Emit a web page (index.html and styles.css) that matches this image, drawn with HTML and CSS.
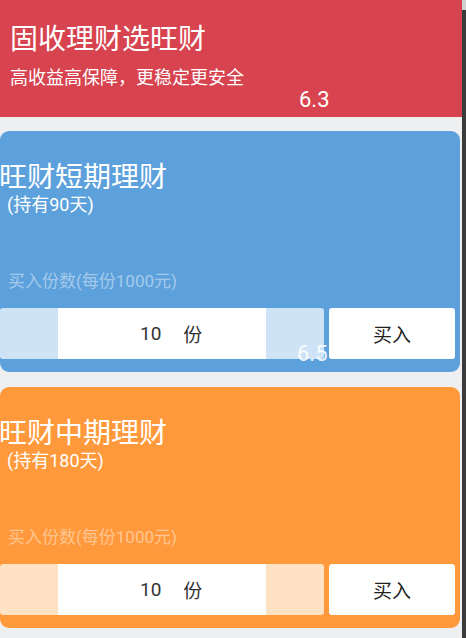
FILE: index.html
```html
<!DOCTYPE html>
<html lang="zh-CN">
<head>
<meta charset="utf-8">
<title>旺财理财</title>
<link rel="stylesheet" href="styles.css">
</head>
<body>
<div class="page">
  <div class="main">
    <header class="header">
      <h1 class="header-title">固收理财选旺财</h1>
      <p class="header-sub">高收益高保障，更稳定更安全</p>
      <span class="rate rate-header">6.3</span>
    </header>
    <div class="cards">
      <section class="card card-blue">
        <h2 class="card-title">旺财短期理财</h2>
        <p class="card-sub">(持有90天)</p>
        <p class="card-label">买入份数(每份1000元)</p>
        <div class="buy-row">
          <div class="qty">
            <div class="qty-inner"><span class="qty-num">10</span><span class="qty-unit">份</span></div>
          </div>
          <button class="buy-btn">买入</button>
        </div>
        <span class="rate rate-card">6.5</span>
      </section>
      <section class="card card-orange">
        <h2 class="card-title">旺财中期理财</h2>
        <p class="card-sub">(持有180天)</p>
        <p class="card-label">买入份数(每份1000元)</p>
        <div class="buy-row">
          <div class="qty">
            <div class="qty-inner"><span class="qty-num">10</span><span class="qty-unit">份</span></div>
          </div>
          <button class="buy-btn">买入</button>
        </div>
      </section>
    </div>
  </div>
  <div class="strip"></div>
</div>
</body>
</html>
```

FILE: styles.css
```css
* { box-sizing: border-box; }
html, body {
  margin: 0;
  padding: 0;
}
body {
  width: 466px;
  height: 638px;
  overflow: hidden;
  background: #eeeff0;
  font-family: "Roboto", "Noto Sans CJK SC", sans-serif;
  color: #fff;
}
.page {
  display: flex;
  height: 638px;
}
.main {
  width: 462px;
  height: 638px;
}
.strip {
  width: 4px;
  height: 638px;
  background: linear-gradient(#cfcfcf 0, #cfcfcf 10px, #3b3b3b 10px);
}
.header {
  position: relative;
  height: 117px;
  background: #d7434f;
  padding: 23px 0 0 10px;
}
.header-title {
  margin: 0;
  font-size: 28px;
  line-height: 34px;
  font-weight: 400;
}
.header-sub {
  margin: 9px 0 0;
  font-size: 18px;
  line-height: 24px;
}
.rate {
  position: absolute;
  font-family: "Roboto", sans-serif;
  font-size: 22px;
  line-height: 22px;
  color: #fff;
}
.rate-header {
  left: 299px;
  top: 89px;
}
.cards {
  display: flex;
  flex-direction: column;
  gap: 15px;
  padding: 14px 2px 0 0;
}
.card {
  position: relative;
  height: 241px;
  border-radius: 9px;
  padding-top: 30px;
}
.card-blue { background: #5da1dc; }
.card-orange { background: #ff993b; }
.card-title {
  margin: 0 0 0 -1px;
  font-size: 28px;
  line-height: 34px;
  font-weight: 400;
}
.card-sub {
  margin: 0;
  padding-left: 7px;
  font-size: 18px;
  line-height: 20px;
}
.card-label {
  margin: 56px 0 0;
  padding-left: 8px;
  font-size: 17px;
  line-height: 20px;
  color: rgba(255, 255, 255, 0.45);
}
.buy-row {
  display: flex;
  gap: 5px;
  margin-top: 17px;
  height: 51px;
  padding-right: 5px;
}
.qty {
  width: 324px;
  background: rgba(255, 255, 255, 0.7);
  border-radius: 3px;
  padding: 0 58px;
  display: flex;
}
.qty-inner {
  flex: 1;
  background: #fff;
  display: flex;
  align-items: center;
  padding-left: 82px;
  color: #333;
  font-size: 19px;
}
.qty-unit {
  margin-left: 22px;
}
.buy-btn {
  flex: 1;
  border: 0;
  border-radius: 3px;
  background: #fff;
  color: #222;
  font-family: "Noto Sans CJK SC", sans-serif;
  font-size: 19px;
  padding: 0;
}
.rate-card {
  left: 297px;
  top: 212px;
  color: rgba(255, 255, 255, 0.9);
}
```
